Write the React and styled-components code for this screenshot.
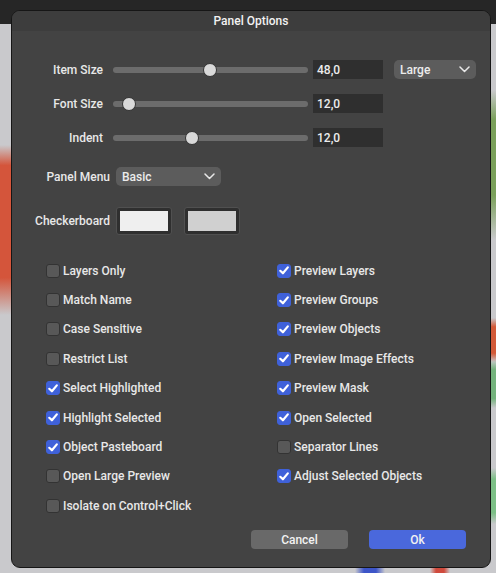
import React from 'react';
import styled, { createGlobalStyle } from 'styled-components';

const GlobalStyle = createGlobalStyle`
  html, body {
    margin: 0;
    padding: 0;
  }
  body {
    font-family: Roboto, "Noto Sans", "Liberation Sans", sans-serif;
    -webkit-font-smoothing: antialiased;
  }
`;

const Page = styled.div`
  width: 496px;
  height: 573px;
  box-sizing: border-box;
  padding: 10px 5px 5px 11px;
  overflow: hidden;
  background:
    linear-gradient(#262626, #262626) 0 0 / 100% 24px no-repeat,
    linear-gradient(180deg, transparent 0, #d4553b 12%, #d4553b 78%, transparent 100%) 0 145px / 11px 170px no-repeat,
    linear-gradient(180deg, transparent 0, #7aa05a 20%, #7aa05a 70%, transparent 100%) 491px 90px / 5px 150px no-repeat,
    linear-gradient(180deg, transparent 0, #d25a38 20%, #d25a38 80%, transparent 100%) 491px 318px / 5px 44px no-repeat,
    linear-gradient(180deg, transparent 0, #74b27c 20%, #74b27c 80%, transparent 100%) 491px 360px / 5px 48px no-repeat,
    linear-gradient(180deg, transparent 0, #7cbf86 20%, #7cbf86 80%, transparent 100%) 491px 468px / 5px 56px no-repeat,
    linear-gradient(90deg, transparent 0, #3d55c8 30%, #3d55c8 70%, transparent 100%) 355px 568px / 30px 5px no-repeat,
    linear-gradient(90deg, transparent 0, #d04a3c 30%, #d04a3c 70%, transparent 100%) 430px 568px / 20px 5px no-repeat,
    #c9c9cc;
`;

const Dialog = styled.div`
  width: 480px;
  height: 558px;
  box-sizing: border-box;
  border: 1px solid #161616;
  border-radius: 9px;
  background: #434343;
  overflow: hidden;
  display: flex;
  flex-direction: column;
`;

const TitleBar = styled.div`
  height: 20px;
  flex: none;
  display: flex;
  align-items: center;
  justify-content: center;
  background: #3d3d3d;
  color: #f2f2f2;
  font-size: 12px;
  font-weight: 500;
`;

const Body = styled.div`
  flex: 1;
  display: flex;
  flex-direction: column;
  padding: 29px 24px 18px 0;
  color: #e8e8e8;
  font-size: 12px;
  font-weight: 500;
`;

const SliderGrid = styled.div`
  display: grid;
  grid-template-columns: 91px 195px 70px 82px;
  column-gap: 10px;
  grid-auto-rows: 19px;
  row-gap: 15px;
  align-items: center;

  & > :nth-child(4n + 3) {
    margin-left: -5px;
  }
  & > :nth-child(4n) {
    margin-left: -4px;
  }
`;

const Label = styled.div`
  text-align: right;
  white-space: nowrap;
`;

const Track = styled.div`
  position: relative;
  height: 6px;
  border-radius: 3px;
  background: #6c6c6c;
`;

const Knob = styled.div`
  position: absolute;
  top: 50%;
  width: 14px;
  height: 14px;
  margin-top: -7px;
  border-radius: 50%;
  box-sizing: border-box;
  background: #d9d9d9;
  border: 1px solid #333;
`;

const NumberField = styled.div`
  height: 19px;
  box-sizing: border-box;
  padding: 0 4px;
  display: flex;
  align-items: center;
  background: #2f2f2f;
  color: #ececec;
  width: 70px;
`;

const Select = styled.div`
  height: 19px;
  width: ${(p) => p.$w}px;
  box-sizing: border-box;
  padding: 0 6px;
  display: flex;
  align-items: center;
  justify-content: space-between;
  background: #5c5c5c;
  border-radius: 5px;
  color: #ececec;
`;

const FormRow = styled.div`
  display: grid;
  grid-template-columns: 98px auto auto;
  column-gap: 6px;
  align-items: center;
  justify-content: start;
  margin-top: ${(p) => p.$top}px;
`;

const SwatchRow = styled.div`
  display: flex;
  gap: 12px;
`;

const Swatch = styled.div`
  width: 56px;
  height: 28px;
  box-sizing: border-box;
  padding: 3px;
  border-radius: 3px;
  background: #2f2f2f;
  border: 1px solid #505050;

  &::after {
    content: '';
    display: block;
    height: 100%;
    background: ${(p) => p.$color};
  }
`;

const CheckGrid = styled.div`
  display: grid;
  grid-template-columns: 231px auto;
  grid-auto-rows: 29.4px;
  padding-left: 34px;
  margin-top: 21px;
`;

const CheckItem = styled.label`
  display: flex;
  align-items: center;
  gap: 3px;
  white-space: nowrap;
`;

const Box = styled.span`
  width: 14px;
  height: 14px;
  box-sizing: border-box;
  border-radius: 3px;
  display: flex;
  align-items: center;
  justify-content: center;
  background: ${(p) => (p.$on ? '#3f61d9' : '#585858')};
  border: 1px solid ${(p) => (p.$on ? '#3f61d9' : '#333')};
`;

const Footer = styled.div`
  display: flex;
  justify-content: flex-end;
  gap: 21px;
  margin-top: auto;
`;

const Button = styled.button`
  width: 97px;
  height: 19px;
  border: none;
  border-radius: 4px;
  padding: 0;
  font: inherit;
  color: #f2f2f2;
  background: ${(p) => (p.$primary ? '#4a68dc' : '#696969')};
`;

const Chevron = () => (
  <svg width="11" height="7" viewBox="0 0 11 7">
    <path d="M1 1 L5.5 5.5 L10 1" fill="none" stroke="#e8e8e8" strokeWidth="1.5" strokeLinecap="round" strokeLinejoin="round" />
  </svg>
);

const Tick = () => (
  <svg width="10" height="9" viewBox="0 0 10 9">
    <path d="M1.3 4.8 L3.9 7.3 L8.8 1.4" fill="none" stroke="#fff" strokeWidth="2.2" strokeLinecap="round" strokeLinejoin="round" />
  </svg>
);

const sliders = [
  { label: 'Item Size', pos: 0.497, value: '48,0' },
  { label: 'Font Size', pos: 0.05, value: '12,0' },
  { label: 'Indent', pos: 0.398, value: '12,0' },
];

const checks = [
  ['Layers Only', false],
  ['Preview Layers', true],
  ['Match Name', false],
  ['Preview Groups', true],
  ['Case Sensitive', false],
  ['Preview Objects', true],
  ['Restrict List', false],
  ['Preview Image Effects', true],
  ['Select Highlighted', true],
  ['Preview Mask', true],
  ['Highlight Selected', true],
  ['Open Selected', true],
  ['Object Pasteboard', true],
  ['Separator Lines', false],
  ['Open Large Preview', false],
  ['Adjust Selected Objects', true],
  ['Isolate on Control+Click', false],
];

export default function App() {
  return (
    <>
      <GlobalStyle />
      <Page>
        <Dialog>
          <TitleBar>Panel Options</TitleBar>
          <Body>
            <SliderGrid>
              {sliders.map((s, i) => (
                <React.Fragment key={s.label}>
                  <Label>{s.label}</Label>
                  <Track>
                    <Knob style={{ left: `calc(${s.pos} * (100% - 14px))` }} />
                  </Track>
                  <NumberField>{s.value}</NumberField>
                  {i === 0 ? (
                    <Select $w={82}>
                      Large
                      <Chevron />
                    </Select>
                  ) : (
                    <span />
                  )}
                </React.Fragment>
              ))}
            </SliderGrid>

            <FormRow $top={20}>
              <Label>Panel Menu</Label>
              <Select $w={105}>
                Basic
                <Chevron />
              </Select>
            </FormRow>

            <FormRow $top={21}>
              <Label>Checkerboard</Label>
              <SwatchRow>
                <Swatch $color="#efefef" />
                <Swatch $color="#d0d0d0" />
              </SwatchRow>
            </FormRow>

            <CheckGrid>
              {checks.map(([text, on]) => (
                <CheckItem key={text}>
                  <Box $on={on}>{on && <Tick />}</Box>
                  {text}
                </CheckItem>
              ))}
            </CheckGrid>

            <Footer>
              <Button>Cancel</Button>
              <Button $primary>Ok</Button>
            </Footer>
          </Body>
        </Dialog>
      </Page>
    </>
  );
}
